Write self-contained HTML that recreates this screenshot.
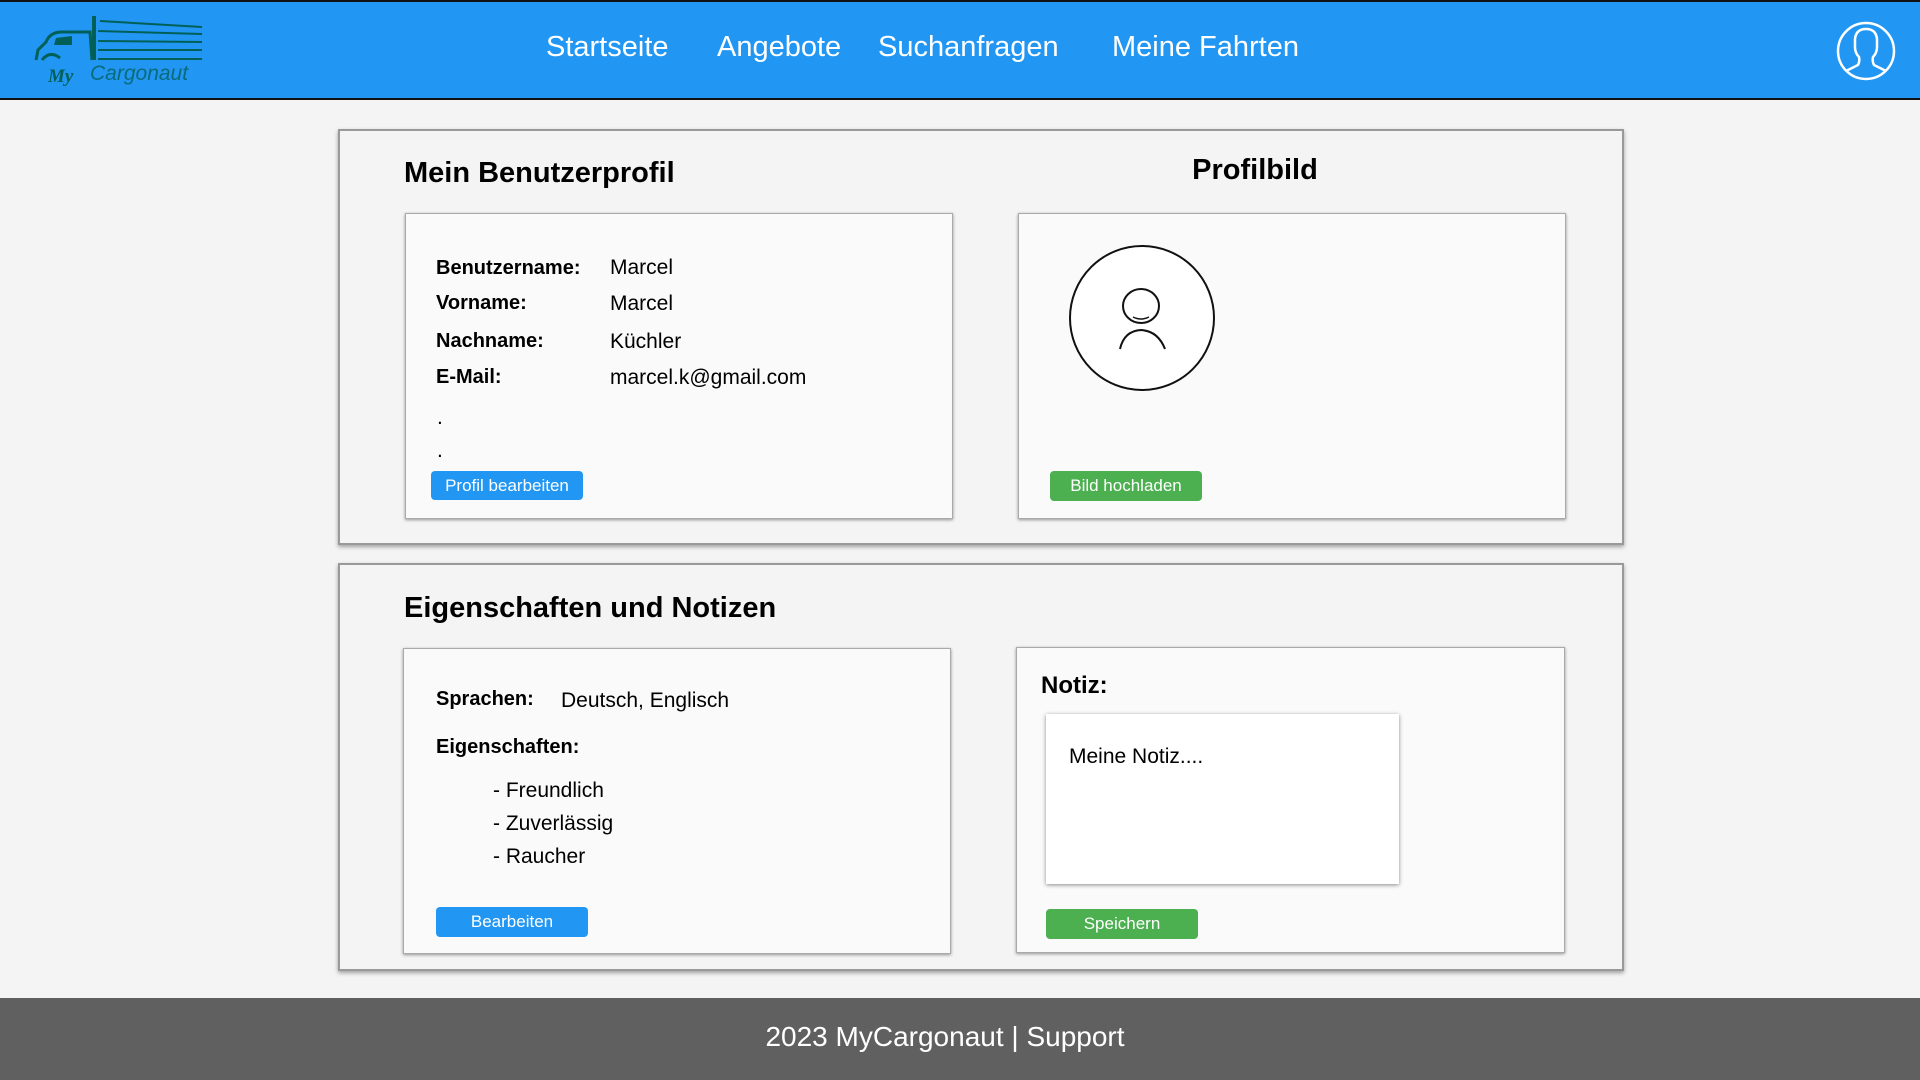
<!DOCTYPE html>
<html><head><meta charset="utf-8"><style>
*{margin:0;padding:0;box-sizing:border-box}
body{width:1920px;height:1080px;position:relative;background:#f4f4f4;font-family:"Liberation Sans",sans-serif;color:#000;overflow:hidden}
.a{position:absolute;white-space:nowrap}
.hdr{left:0;top:0;width:1920px;height:100px;background:#2196f3;border-top:2px solid #111;border-bottom:2px solid #111}
.nav{color:#fff;font-size:29px;top:31px}
.panel{background:#f4f4f4;border:2px solid #999;box-shadow:0 2px 4px rgba(0,0,0,.35)}
.box{background:#fafafa;border:1px solid #aaa;box-shadow:0 1px 3px rgba(0,0,0,.4)}
.t{font-size:29px;font-weight:bold}
.l{font-size:20px;font-weight:bold;line-height:24px}
.v{font-size:21px;line-height:24px}
.btn{color:#fff;font-size:17px;text-align:center;border-radius:4px;line-height:29px}
.blue{background:#2196f3}.green{background:#4caf50}
</style></head><body>
<div class="a hdr"></div>
<svg class="a" style="left:32px;top:12px" width="180" height="75" viewBox="0 0 180 75">
<g fill="none" stroke="#006058" stroke-width="3">
<path d="M4 48 L6 38 L14 30 Q18 20 30 20 L58 20 L60 48"/>
<path d="M10 48 Q18 38 28 46"/>
<line x1="62" y1="4" x2="62" y2="48" stroke-width="4"/>
<line x1="68" y1="9" x2="170" y2="15" stroke-width="2"/>
<line x1="66" y1="19" x2="170" y2="22" stroke-width="2"/>
<line x1="66" y1="29" x2="170" y2="30" stroke-width="2"/>
<line x1="66" y1="38" x2="170" y2="38" stroke-width="2"/>
<line x1="66" y1="47" x2="170" y2="47" stroke-width="2"/>
</g>
<path d="M24 26 L40 24 L40 33 L22 33 Z" fill="#006058"/>
<text x="16" y="70" font-family="Liberation Serif" font-style="italic" font-weight="bold" font-size="19" fill="#006058">My</text>
<text x="58" y="68" font-family="Liberation Sans" font-style="italic" font-size="21" fill="#0a6b7a">Cargonaut</text>
</svg>
<div class="a nav" style="left:546px">Startseite</div>
<div class="a nav" style="left:717px">Angebote</div>
<div class="a nav" style="left:878px">Suchanfragen</div>
<div class="a nav" style="left:1112px">Meine Fahrten</div>
<svg class="a" style="left:1836px;top:21px" width="60" height="60" viewBox="0 0 60 60">
<circle cx="30" cy="30" r="28" fill="none" stroke="#fff" stroke-width="2.5"/>
<path d="M10 50 L22 44 Q24 40 23 36 Q19 32 19 26 L19 18 Q20 8 30 8 Q40 8 41 18 L41 26 Q41 32 37 36 Q36 40 38 44 L50 50" fill="none" stroke="#fff" stroke-width="2.5"/>
</svg>

<div class="a panel" style="left:338px;top:129px;width:1286px;height:416px"></div>
<div class="a t" style="left:404px;top:157px">Mein Benutzerprofil</div>
<div class="a t" style="left:1255px;top:154px;transform:translateX(-50%)">Profilbild</div>
<div class="a box" style="left:405px;top:213px;width:548px;height:306px"></div>
<div class="a box" style="left:1018px;top:213px;width:548px;height:306px"></div>
<div class="a l" style="left:436px;top:256px">Benutzername:</div><div class="a v" style="left:610px;top:256px">Marcel</div>
<div class="a l" style="left:436px;top:291px">Vorname:</div><div class="a v" style="left:610px;top:292px">Marcel</div>
<div class="a l" style="left:436px;top:329px">Nachname:</div><div class="a v" style="left:610px;top:330px">Küchler</div>
<div class="a l" style="left:436px;top:365px">E-Mail:</div><div class="a v" style="left:610px;top:366px">marcel.k@gmail.com</div>
<div class="a v" style="left:437px;top:406px">.</div>
<div class="a v" style="left:437px;top:439px">.</div>
<div class="a btn blue" style="left:431px;top:471px;width:152px;height:29px">Profil bearbeiten</div>
<svg class="a" style="left:1068px;top:245px" width="148" height="148" viewBox="0 0 148 148">
<circle cx="74" cy="73" r="72" fill="#fff" stroke="#111" stroke-width="2"/>
<ellipse cx="73" cy="61" rx="18" ry="17" fill="none" stroke="#111" stroke-width="2"/>
<path d="M65 72 Q73 76 81 72" fill="none" stroke="#111" stroke-width="1.5"/>
<path d="M52 104 Q56 86 73 85 Q90 86 97 104" fill="none" stroke="#111" stroke-width="2"/>
</svg>
<div class="a btn green" style="left:1050px;top:471px;width:152px;height:30px">Bild hochladen</div>

<div class="a panel" style="left:338px;top:563px;width:1286px;height:408px"></div>
<div class="a t" style="left:404px;top:592px">Eigenschaften und Notizen</div>
<div class="a box" style="left:403px;top:648px;width:548px;height:306px"></div>
<div class="a box" style="left:1016px;top:647px;width:549px;height:306px"></div>
<div class="a l" style="left:436px;top:687px">Sprachen:</div><div class="a v" style="left:561px;top:689px">Deutsch, Englisch</div>
<div class="a l" style="left:436px;top:735px">Eigenschaften:</div>
<div class="a v" style="left:493px;top:779px">- Freundlich</div>
<div class="a v" style="left:493px;top:812px">- Zuverlässig</div>
<div class="a v" style="left:493px;top:845px">- Raucher</div>
<div class="a btn blue" style="left:436px;top:907px;width:152px;height:30px">Bearbeiten</div>
<div class="a" style="left:1041px;top:672px;font-size:24px;font-weight:bold">Notiz:</div>
<div class="a" style="left:1046px;top:714px;width:353px;height:170px;background:#fff;box-shadow:0 1px 4px rgba(0,0,0,.45)"></div>
<div class="a v" style="left:1069px;top:745px">Meine Notiz....</div>
<div class="a btn green" style="left:1046px;top:909px;width:152px;height:30px">Speichern</div>

<div class="a" style="left:0;top:998px;width:1920px;height:82px;background:#606060"></div>
<div class="a" style="left:945px;top:1021px;transform:translateX(-50%);color:#fff;font-size:28px">2023 MyCargonaut | Support</div>
</body></html>
